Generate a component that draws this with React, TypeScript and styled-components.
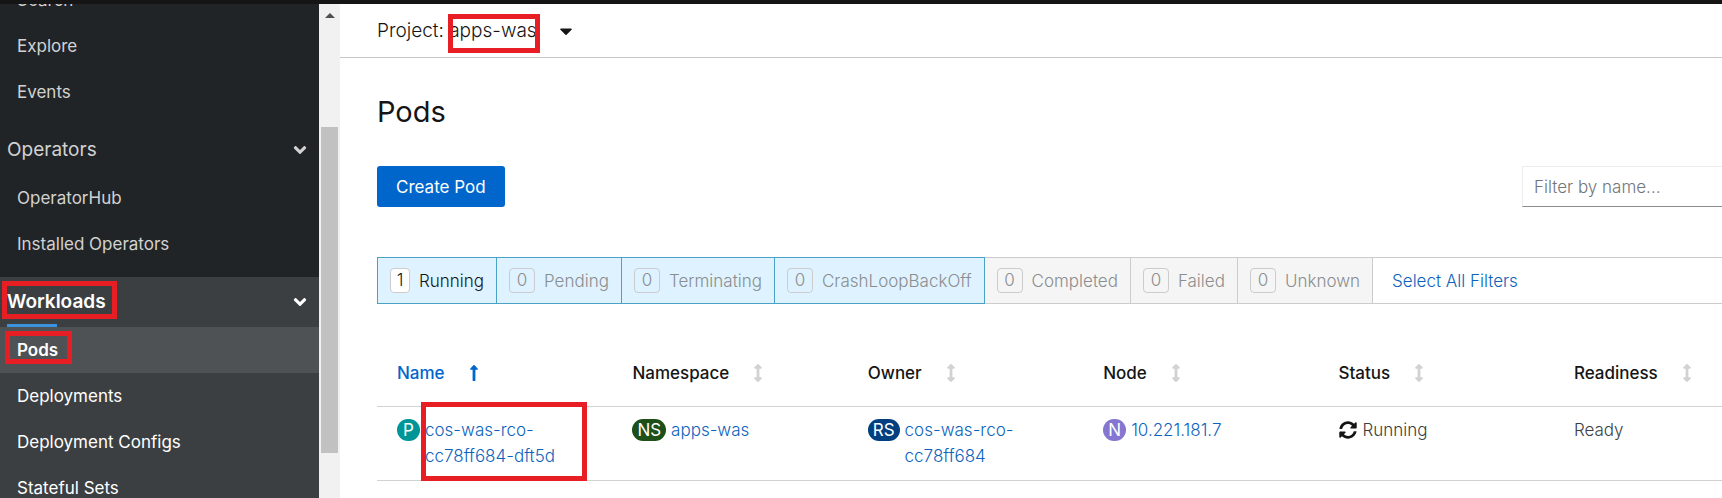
import React from 'react';
import styled, { createGlobalStyle, css } from 'styled-components';
import {
  FaAngleDown,
  FaArrowsAltV,
  FaCaretDown,
  FaLongArrowAltUp,
  FaSyncAlt,
} from 'react-icons/fa';

const GlobalStyle = createGlobalStyle`
  *, *::before, *::after { box-sizing: border-box; }
  body {
    margin: 0;
    background: #fff;
    color: #151515;
    font: 300 17px/26px Inter, Roboto, "Liberation Sans", sans-serif;
  }
  button, input { font: inherit; }
`;

const Shell = styled.div`
  display: flex;
  flex-direction: column;
  height: 100vh;
  overflow: hidden;
`;

const Masthead = styled.header`
  flex: none;
  height: 4px;
  background: #151515;
`;

const Body = styled.div`
  display: flex;
  flex: 1;
  min-height: 0;
`;

const Sidebar = styled.nav`
  flex: none;
  width: 319px;
  overflow: hidden;
  background: #212427;
`;

/* The list is shown partly scrolled, so its first entry is cut off. */
const NavScroll = styled.div`
  margin-top: -27px;
`;

const NavSection = styled.section<{ $current?: boolean }>`
  padding-bottom: 10px;
  color: ${p => (p.$current ? '#fff' : '#d2d2d2')};
  background: ${p => (p.$current ? '#3c3f42' : 'transparent')};
`;

const NavHeading = styled.button<{ $current?: boolean }>`
  position: relative;
  display: flex;
  align-items: center;
  justify-content: space-between;
  width: 100%;
  height: 50px;
  padding: 0 9px 0 7px;
  border: 0;
  background: none;
  color: inherit;
  font-size: 19px;
  font-weight: ${p => (p.$current ? 600 : 400)};
  text-align: left;

  ${p =>
    p.$current &&
    css`
      &::after {
        content: '';
        position: absolute;
        left: 7px;
        bottom: 0;
        width: 50px;
        height: 3px;
        background: #3b92df;
      }
    `}
`;

const NavList = styled.ul`
  margin: 0;
  padding: 0;
  list-style: none;
`;

const NavLink = styled.a<{ $current?: boolean }>`
  display: flex;
  align-items: center;
  height: 46px;
  padding-left: 17px;
  color: inherit;
  font-weight: ${p => (p.$current ? 600 : 400)};
  background: ${p => (p.$current ? '#4f5255' : 'transparent')};
  text-decoration: none;
`;

const ScrollTrack = styled.div`
  display: flex;
  flex: none;
  flex-direction: column;
  align-items: center;
  width: 21px;
  background: #f1f1f1;
`;

const ScrollArrow = styled.span`
  margin: 9px 0 109px;
  border: 5px solid transparent;
  border-top: 0;
  border-bottom-color: #505050;
`;

const ScrollThumb = styled.span`
  width: 17px;
  height: 66%;
  background: #c1c1c1;
`;

const Main = styled.main`
  flex: 1;
  min-width: 0;
`;

const ProjectBar = styled.div`
  display: flex;
  align-items: center;
  height: 54px;
  padding-left: 37px;
  border-bottom: 1px solid #c7c7c7;
`;

const ProjectButton = styled.button`
  display: flex;
  align-items: center;
  gap: 19px;
  padding: 0;
  border: 0;
  background: none;
  color: #151515;
  font-size: 19px;
`;

const Content = styled.div`
  padding-left: 37px;
`;

const Title = styled.h1`
  margin: 0;
  padding: 35px 0;
  font-size: 29px;
  font-weight: 400;
  line-height: 38px;
`;

const Toolbar = styled.div`
  display: flex;
  justify-content: space-between;
`;

const PrimaryButton = styled.button`
  height: 41px;
  padding: 0 19px;
  border: 0;
  border-radius: 3px;
  background: #06c;
  color: #fff;
  font-weight: 400;
`;

const FilterInput = styled.input`
  width: 200px;
  height: 41px;
  padding: 0 11px;
  border: 1px solid #ededed;
  border-right: 0;
  border-bottom-color: #8a8d90;
  border-radius: 0;
  outline: 0;

  &::placeholder {
    color: #72767b;
    opacity: 1;
  }
`;

const FilterBar = styled.div`
  display: flex;
  height: 47px;
  margin-top: 50px;
  border: solid #ccc;
  border-width: 1px 0;
`;

const Chip = styled.button<{ $active?: boolean; $empty?: boolean }>`
  display: flex;
  align-items: center;
  gap: 9px;
  height: 47px;
  margin-top: -1px;
  padding: 0 12px;
  border: solid ${p => (p.$active ? '#4ba2c7' : '#ccc')};
  border-width: 1px 1px 1px 0;
  background: ${p => (p.$active ? '#def3ff' : '#f5f5f5')};
  color: ${p => (p.$empty ? '#8b8d8f' : '#151515')};

  &:first-child {
    border-left-width: 1px;
  }
`;

const Count = styled.span<{ $empty?: boolean }>`
  width: ${p => (p.$empty ? 26 : 20)}px;
  height: 25px;
  border: 1px solid #ccc;
  border-radius: 4px;
  background: ${p => (p.$empty ? 'transparent' : '#fff')};
  line-height: 23px;
  text-align: center;
`;

const TextLink = styled.a`
  color: #0b63bd;
  text-decoration: none;
`;

const SelectAll = styled(TextLink)`
  align-self: center;
  margin-left: 19px;
`;

const Table = styled.table`
  width: 100%;
  margin-top: 36px;
  border-collapse: collapse;
  table-layout: fixed;
`;

const HeadCell = styled.th`
  width: 17.5%;
  height: 66px;
  padding: 0 0 0 20px;
  border-bottom: 1px solid #d2d2d2;
  text-align: left;

  &:last-child {
    width: auto;
  }
`;

const SortButton = styled.button<{ $sorted?: boolean }>`
  display: flex;
  align-items: center;
  gap: 20px;
  padding: 0;
  border: 0;
  background: none;
  color: ${p => (p.$sorted ? '#06c' : '#151515')};
  font-weight: 500;

  svg {
    color: ${p => (p.$sorted ? '#06c' : '#d2d2d2')};
  }
`;

const Cell = styled.td`
  height: 74px;
  padding: 10px 20px;
  border-bottom: 1px solid #d2d2d2;
  vertical-align: top;
`;

const Resource = styled.div`
  display: flex;
  align-items: flex-start;
  gap: 5px;
`;

const Badge = styled.span<{ $color: string }>`
  flex: none;
  min-width: 23px;
  height: 22px;
  margin-top: 2px;
  padding: 0 5px;
  border-radius: 11px;
  background: ${p => p.$color};
  color: #fff;
  font-weight: 400;
  line-height: 22px;
  text-align: center;
`;

const StatusText = styled.span`
  display: flex;
  align-items: center;
  gap: 6px;
  color: #3c3f42;
`;

const Marked = styled.span`
  position: relative;
`;

const Marker = styled.span<{ $x: number; $y: number; $w: number; $h: number }>`
  position: absolute;
  left: ${p => p.$x}px;
  top: ${p => p.$y}px;
  width: ${p => p.$w}px;
  height: ${p => p.$h}px;
  border: 5px solid #e81e25;
  pointer-events: none;
`;

const filters = [
  { label: 'Running', count: 1, active: true },
  { label: 'Pending', count: 0, active: true },
  { label: 'Terminating', count: 0, active: true },
  { label: 'CrashLoopBackOff', count: 0, active: true },
  { label: 'Completed', count: 0, active: false },
  { label: 'Failed', count: 0, active: false },
  { label: 'Unknown', count: 0, active: false },
];

const columns = ['Name', 'Namespace', 'Owner', 'Node', 'Status', 'Readiness'];

function Links({ items }: { items: string[] }) {
  return (
    <NavList>
      {items.map(item => (
        <li key={item}>
          <NavLink href="#">{item}</NavLink>
        </li>
      ))}
    </NavList>
  );
}

export default function App() {
  return (
    <Shell>
      <GlobalStyle />
      <Masthead />
      <Body>
        <Sidebar>
          <NavScroll>
            <NavSection>
              <Links items={['Search', 'Explore', 'Events']} />
            </NavSection>
            <NavSection>
              <NavHeading>
                Operators
                <FaAngleDown size={20} />
              </NavHeading>
              <Links items={['OperatorHub', 'Installed Operators']} />
            </NavSection>
            <NavSection $current>
              <NavHeading $current>
                <Marked>
                  Workloads
                  <Marker $x={-5} $y={-8} $w={115} $h={38} />
                </Marked>
                <FaAngleDown size={20} />
              </NavHeading>
              <NavLink href="#" $current>
                <Marked>
                  Pods
                  <Marker $x={-12} $y={-6} $w={67} $h={33} />
                </Marked>
              </NavLink>
              <Links items={['Deployments', 'Deployment Configs', 'Stateful Sets']} />
            </NavSection>
          </NavScroll>
        </Sidebar>
        <ScrollTrack>
          <ScrollArrow />
          <ScrollThumb />
        </ScrollTrack>
        <Main>
          <ProjectBar>
            <ProjectButton>
              <span>
                Project:{' '}
                <Marked>
                  apps-was
                  <Marker $x={-1} $y={-5} $w={92} $h={39} />
                </Marked>
              </span>
              <FaCaretDown size={20} />
            </ProjectButton>
          </ProjectBar>
          <Content>
            <Title>Pods</Title>
            <Toolbar>
              <PrimaryButton>Create Pod</PrimaryButton>
              <FilterInput type="text" aria-label="Filter by name" placeholder="Filter by name..." />
            </Toolbar>
            <FilterBar>
              {filters.map(f => (
                <Chip key={f.label} $active={f.active} $empty={!f.count}>
                  <Count $empty={!f.count}>{f.count}</Count>
                  {f.label}
                </Chip>
              ))}
              <SelectAll href="#">Select All Filters</SelectAll>
            </FilterBar>
            <Table>
              <thead>
                <tr>
                  {columns.map((name, i) => (
                    <HeadCell key={name}>
                      <SortButton $sorted={i === 0}>
                        {name}
                        {i === 0 ? <FaLongArrowAltUp size={18} /> : <FaArrowsAltV size={18} />}
                      </SortButton>
                    </HeadCell>
                  ))}
                </tr>
              </thead>
              <tbody>
                <tr>
                  <Cell>
                    <Resource>
                      <Badge $color="#009596">P</Badge>
                      <Marked>
                        <TextLink href="#">cos-was-rco-<wbr />cc78ff684-dft5d</TextLink>
                        <Marker $x={-4} $y={-15} $w={166} $h={79} />
                      </Marked>
                    </Resource>
                  </Cell>
                  <Cell>
                    <Resource>
                      <Badge $color="#1e4f18">NS</Badge>
                      <TextLink href="#">apps-was</TextLink>
                    </Resource>
                  </Cell>
                  <Cell>
                    <Resource>
                      <Badge $color="#004080">RS</Badge>
                      <TextLink href="#">cos-was-rco-<wbr />cc78ff684</TextLink>
                    </Resource>
                  </Cell>
                  <Cell>
                    <Resource>
                      <Badge $color="#8476d1">N</Badge>
                      <TextLink href="#">10.221.181.7</TextLink>
                    </Resource>
                  </Cell>
                  <Cell>
                    <StatusText>
                      <FaSyncAlt size={18} color="#151515" />
                      Running
                    </StatusText>
                  </Cell>
                  <Cell>
                    <StatusText>Ready</StatusText>
                  </Cell>
                </tr>
              </tbody>
            </Table>
          </Content>
        </Main>
      </Body>
    </Shell>
  );
}
